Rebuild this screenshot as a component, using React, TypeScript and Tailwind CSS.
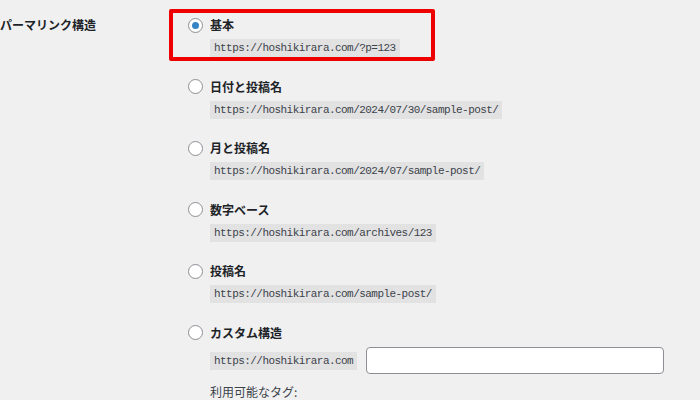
import React from 'react';

interface PermalinkOption {
  label: string;
  sample: string;
  checked?: boolean;
  highlighted?: boolean;
}

const options: PermalinkOption[] = [
  { label: '基本', sample: 'https://hoshikirara.com/?p=123', checked: true, highlighted: true },
  { label: '日付と投稿名', sample: 'https://hoshikirara.com/2024/07/30/sample-post/' },
  { label: '月と投稿名', sample: 'https://hoshikirara.com/2024/07/sample-post/' },
  { label: '数字ベース', sample: 'https://hoshikirara.com/archives/123' },
  { label: '投稿名', sample: 'https://hoshikirara.com/sample-post/' },
];

const jp = "font-['Noto_Sans_CJK_JP',sans-serif]";
const mono = "font-['Liberation_Mono',monospace]";

const Radio: React.FC<{ checked?: boolean }> = ({ checked }) => (
  <span className="flex h-[15px] w-[15px] shrink-0 items-center justify-center rounded-full border border-[#8c8f94] bg-white">
    {checked && <span className="h-[7px] w-[7px] rounded-full bg-[#3582c4]" />}
  </span>
);

const Code: React.FC<{ children: React.ReactNode }> = ({ children }) => (
  <code
    className={`${mono} block h-[18px] whitespace-nowrap bg-[#e2e2e3] px-[4px] text-[11px] leading-[18px] tracking-[-0.55px] text-[#3c434a]`}
  >
    {children}
  </code>
);

const OptionRow: React.FC<{ option: PermalinkOption }> = ({ option }) => (
  <div className="relative flex flex-col items-start">
    {option.highlighted && (
      <div className="pointer-events-none absolute left-[-19px] top-[-6.5px] h-[52px] w-[266px] rounded-[2px] border-[4px] border-[#ee0000]" />
    )}
    <label className="flex h-[20px] items-center gap-[7px]">
      <Radio checked={option.checked} />
      <span className={`${jp} text-[12px] font-bold text-[#1d2327]`}>{option.label}</span>
    </label>
    <div className="ml-[22px] mt-[4px]">
      <Code>{option.sample}</Code>
    </div>
  </div>
);

export default function App() {
  return (
    <div className="flex h-[400px] w-[700px] overflow-hidden bg-[#f0f0f1]">
      <div className="w-[188px] shrink-0 pt-[15px]">
        <div className={`${jp} h-[20px] text-[12px] font-bold leading-[20px] text-[#1d2327]`}>
          パーマリンク構造
        </div>
      </div>
      <div className="flex flex-col gap-[19.5px] pt-[15px]">
        {options.map((o) => (
          <OptionRow key={o.label} option={o} />
        ))}
        <div className="flex flex-col items-start">
          <label className="flex h-[20px] items-center gap-[7px]">
            <Radio />
            <span className={`${jp} text-[12px] font-bold text-[#1d2327]`}>カスタム構造</span>
          </label>
          <div className="ml-[22px] mt-[4.5px] flex h-[27px] items-center gap-[9px]">
            <Code>https://hoshikirara.com</Code>
            <input
              type="text"
              className="h-[27px] w-[298px] rounded-[4px] border border-[#8c8f94] bg-white px-2 outline-none"
            />
          </div>
          <p className={`${jp} ml-[22px] mt-[8px] text-[12px] leading-[20px] text-[#3c434a]`}>
            利用可能なタグ:
          </p>
        </div>
      </div>
    </div>
  );
}
